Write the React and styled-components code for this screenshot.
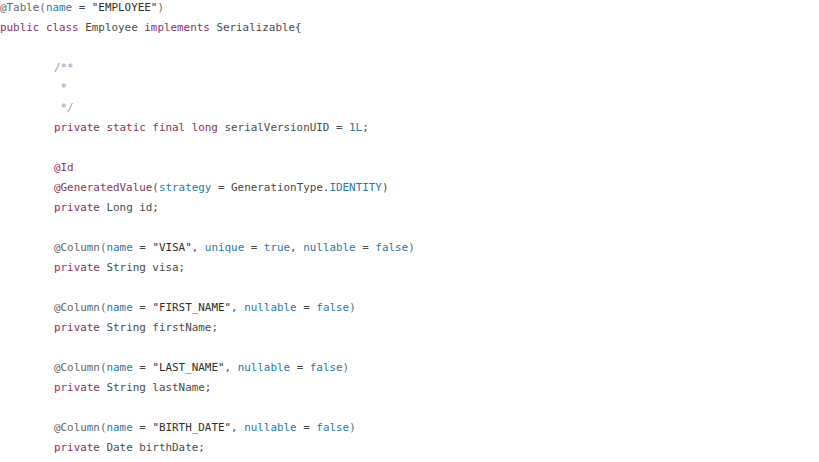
import React from 'react';
import styled, { createGlobalStyle } from 'styled-components';

const GlobalStyle = createGlobalStyle`
    html, body {
        margin: 0;
        padding: 0;
        background: #ffffff;
    }
`;

const colors = {
    kw: '#86345f',
    ann: '#666666',
    attr: '#2a78a6',
    str: '#2e2e2e',
    plain: '#4a4a4a',
    comment: '#9c9c9c',
};

const Page = styled.div`
    width: 819px;
    height: 462px;
    overflow: hidden;
    background: #ffffff;
`;

const Code = styled.pre`
    margin: -2px 0 0 0;
    padding: 0;
    font-family: "DejaVu Sans Mono", "Liberation Mono", monospace;
    font-size: 10.9px;
    line-height: 20px;
    color: ${colors.plain};
`;

const Line = styled.div`
    height: 20px;
    white-space: pre;
    padding-left: ${({ $indent }) => ($indent ? '54px' : '0')};
`;

const Token = styled.span`
    color: ${({ $kind }) => colors[$kind] || colors.plain};
`;

const lines = [
    [0, [['ann', '@Table('], ['attr', 'name'], ['plain', ' = '], ['str', '"EMPLOYEE"'], ['ann', ')']]],
    [0, [['kw', 'public class '], ['plain', 'Employee '], ['kw', 'implements '], ['plain', 'Serializable{']]],
    [1, []],
    [1, [['comment', '/**']]],
    [1, [['comment', ' *']]],
    [1, [['comment', ' */']]],
    [1, [['kw', 'private static final long '], ['plain', 'serialVersionUID = '], ['attr', '1L'], ['plain', ';']]],
    [1, []],
    [1, [['kw', '@Id']]],
    [1, [['kw', '@GeneratedValue('], ['attr', 'strategy'], ['plain', ' = GenerationType.'], ['attr', 'IDENTITY'], ['plain', ')']]],
    [1, [['kw', 'private '], ['plain', 'Long id;']]],
    [1, []],
    [1, [['ann', '@Column('], ['attr', 'name'], ['plain', ' = '], ['str', '"VISA"'], ['plain', ', '], ['attr', 'unique'], ['plain', ' = '], ['attr', 'true'], ['plain', ', '], ['attr', 'nullable'], ['plain', ' = '], ['attr', 'false'], ['ann', ')']]],
    [1, [['kw', 'private '], ['plain', 'String visa;']]],
    [1, []],
    [1, [['ann', '@Column('], ['attr', 'name'], ['plain', ' = '], ['str', '"FIRST_NAME"'], ['plain', ', '], ['attr', 'nullable'], ['plain', ' = '], ['attr', 'false'], ['ann', ')']]],
    [1, [['kw', 'private '], ['plain', 'String firstName;']]],
    [1, []],
    [1, [['ann', '@Column('], ['attr', 'name'], ['plain', ' = '], ['str', '"LAST_NAME"'], ['plain', ', '], ['attr', 'nullable'], ['plain', ' = '], ['attr', 'false'], ['ann', ')']]],
    [1, [['kw', 'private '], ['plain', 'String lastName;']]],
    [1, []],
    [1, [['ann', '@Column('], ['attr', 'name'], ['plain', ' = '], ['str', '"BIRTH_DATE"'], ['plain', ', '], ['attr', 'nullable'], ['plain', ' = '], ['attr', 'false'], ['ann', ')']]],
    [1, [['kw', 'private '], ['plain', 'Date birthDate;']]],
];

function App() {
    return (
        <Page>
            <GlobalStyle />
            <Code>
                {lines.map(([indent, tokens], i) => (
                    <Line key={i} $indent={indent}>
                        {tokens.length === 0 ? ' ' : tokens.map(([kind, text], j) => (
                            <Token key={j} $kind={kind}>{text}</Token>
                        ))}
                    </Line>
                ))}
            </Code>
        </Page>
    );
}

export default App;
